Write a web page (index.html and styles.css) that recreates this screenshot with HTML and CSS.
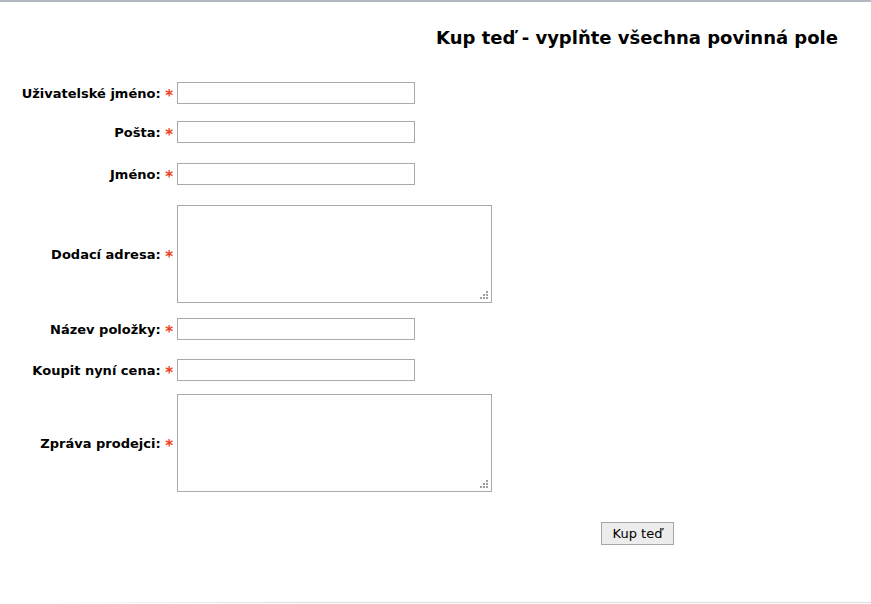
FILE: index.html
```html
<!DOCTYPE html>
<html lang="cs">
<head>
<meta charset="utf-8">
<link rel="stylesheet" href="styles.css">
</head>
<body>
<div class="page">
  <h1 class="title">Kup teď - vyplňte všechna povinná pole</h1>
  <form class="form">
    <div class="row r1"><label class="lbl">Uživatelské jméno: <span class="req">*</span></label><input class="inp" type="text"></div>
    <div class="row r2"><label class="lbl">Pošta: <span class="req">*</span></label><input class="inp" type="text"></div>
    <div class="row r3"><label class="lbl">Jméno: <span class="req">*</span></label><input class="inp" type="text"></div>
    <div class="row r4"><label class="lbl">Dodací adresa: <span class="req">*</span></label><span class="ta-wrap"><textarea class="ta"></textarea><svg class="grip" width="8" height="8" viewBox="0 0 8 8"><rect x="6" y="0" width="2" height="2"/><rect x="3" y="3" width="2" height="2"/><rect x="6" y="3" width="2" height="2"/><rect x="0" y="6" width="2" height="2"/><rect x="3" y="6" width="2" height="2"/><rect x="6" y="6" width="2" height="2"/></svg></span></div>
    <div class="row r5"><label class="lbl">Název položky: <span class="req">*</span></label><input class="inp" type="text"></div>
    <div class="row r6"><label class="lbl">Koupit nyní cena: <span class="req">*</span></label><input class="inp" type="text"></div>
    <div class="row r7"><label class="lbl">Zpráva prodejci: <span class="req">*</span></label><span class="ta-wrap"><textarea class="ta"></textarea><svg class="grip" width="8" height="8" viewBox="0 0 8 8"><rect x="6" y="0" width="2" height="2"/><rect x="3" y="3" width="2" height="2"/><rect x="6" y="3" width="2" height="2"/><rect x="0" y="6" width="2" height="2"/><rect x="3" y="6" width="2" height="2"/><rect x="6" y="6" width="2" height="2"/></svg></span></div>
    <div class="actions"><button type="button" class="btn">Kup teď</button></div>
  </form>
  <div class="footer-line"></div>
</div>
</body>
</html>
```
FILE: styles.css
```css
html, body {
  margin: 0;
  padding: 0;
  background: #fff;
}
body {
  font-family: "DejaVu Sans", Verdana, sans-serif;
  color: #000;
  border-top: 2px solid #b3b9c3;
  height: 604px;
  box-sizing: border-box;
  overflow: hidden;
}
.page {
  display: flex;
  flex-direction: column;
  height: 100%;
}
.title {
  margin: 25px 33px 0 0;
  text-align: right;
  font-size: 18px;
  font-weight: bold;
  line-height: 22px;
}
.form {
  display: flex;
  flex-direction: column;
}
.row {
  display: flex;
  align-items: center;
}
.r1 { margin-top: 33px; }
.r2 { margin-top: 17px; }
.r3 { margin-top: 20px; }
.r4 { margin-top: 20px; }
.r5 { margin-top: 15px; }
.r6 { margin-top: 19px; }
.r7 { margin-top: 13px; }
.lbl {
  width: 177px;
  padding: 2px 4px 0 0;
  box-sizing: border-box;
  text-align: right;
  font-size: 13px;
  font-weight: bold;
  white-space: nowrap;
  line-height: 16px;
}
.req {
  color: #ee3d20;
  font-size: 15px;
  line-height: 0;
  vertical-align: -3px;
}
.inp {
  width: 238px;
  height: 22px;
  box-sizing: border-box;
  border: 1px solid #a9a9a9;
  margin: 0;
  padding: 1px 2px;
  font: 13px "DejaVu Sans", sans-serif;
}
.ta-wrap {
  position: relative;
  display: flex;
}
.ta {
  width: 315px;
  height: 98px;
  box-sizing: border-box;
  border: 1px solid #a9a9a9;
  margin: 0;
  padding: 2px;
  resize: none;
  font: 13px "DejaVu Sans", sans-serif;
}
.grip {
  position: absolute;
  right: 4px;
  bottom: 4px;
  fill: #a0a0a0;
}
.actions {
  display: flex;
  margin-top: 30px;
  padding-left: 601px;
}
.btn {
  width: 73px;
  height: 23px;
  box-sizing: border-box;
  border: 1px solid #a6a6a6;
  background: #ececec;
  border-radius: 0;
  font: 13px "DejaVu Sans", sans-serif;
  color: #000;
  padding: 0;
  margin: 0;
}
.footer-line {
  margin-top: auto;
  margin-bottom: 1px;
  height: 1px;
  background: linear-gradient(to right, rgba(221,221,221,0) 40px, #dcdcdc 300px, #dcdcdc);
}
```
